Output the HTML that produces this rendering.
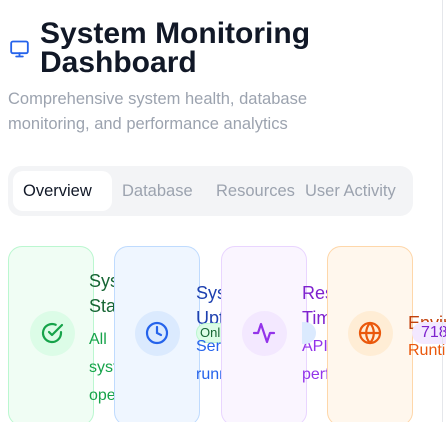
<!DOCTYPE html>
<html><head><style>
*{margin:0;padding:0;box-sizing:border-box}
html,body{width:446px;height:422px;overflow:hidden;background:#fff}
body{font-family:"Liberation Sans",Arial,sans-serif}
#w{position:relative;width:446px;height:422px;overflow:hidden}
.a{position:absolute;display:block;white-space:nowrap}
.h{font-size:30px;line-height:30px;font-weight:bold;color:#111827}
.sub{font-size:16.5px;line-height:25px;color:#9ca3af}
.tab{font-size:16.5px;line-height:20px;color:#9ca3af}
.card{border-radius:14px;border:1px solid;width:86px;height:180px;top:246px}
.ic{width:45px;height:45px;border-radius:50%;top:311px}
.t{font-size:18px;line-height:25px;font-weight:500}
.d{font-size:16px;line-height:28px}
</style></head><body><div id="w">
<svg class="a" style="left:9px;top:39px" width="21" height="20" viewBox="0 0 24 24" fill="none" stroke="#2563eb" stroke-width="2.2" stroke-linecap="round"><rect x="2" y="3" width="20" height="14" rx="2"/><path d="M8 21h8M12 17v4"/></svg>
<div class="a h" style="left:40px;top:19px">System Monitoring</div>
<div class="a h" style="left:40px;top:48px">Dashboard</div>
<div class="a sub" style="left:8px;top:87px">Comprehensive system health, database</div>
<div class="a sub" style="left:8px;top:112px">monitoring, and performance analytics</div>

<div class="a" style="left:8px;top:166px;width:405px;height:50px;background:#f3f4f6;border-radius:13px"></div>
<div class="a" style="left:13px;top:171px;width:99px;height:40px;background:#fff;border-radius:10px"></div>
<div class="a tab" style="left:23px;top:181px;color:#111827">Overview</div>
<div class="a tab" style="left:122px;top:181px">Database</div>
<div class="a tab" style="left:216px;top:181px">Resources</div>
<div class="a tab" style="left:305px;top:181px">User Activity</div>

<!-- card 1 -->
<div class="a card" style="left:8px;background:#f0fdf4;border-color:#bbf7d0"></div>
<div class="a ic" style="left:30px;background:#dcfce7"></div>
<svg class="a" style="left:40px;top:321px" width="24" height="24" viewBox="0 0 24 24" fill="none" stroke="#16a34a" stroke-width="2.2" stroke-linecap="round" stroke-linejoin="round"><path d="M21 11.1V12a9 9 0 1 1-5.3-8.2"/><path d="M9 11l3 3L22 4"/></svg>
<div class="a t" style="left:89px;top:269px;color:#166534">System<br>Status</div>
<div class="a d" style="left:89px;top:326px;color:#16a34a">All<br>systems<br>operational</div>

<!-- card 2 -->
<div class="a card" style="left:114px;background:#eff6ff;border-color:#bfdbfe"></div>
<div class="a ic" style="left:135px;background:#dbeafe"></div>
<svg class="a" style="left:145px;top:321px" width="24" height="24" viewBox="0 0 24 24" fill="none" stroke="#2563eb" stroke-width="2.2" stroke-linecap="round"><circle cx="12" cy="12" r="10"/><path d="M12 6v6l4 2"/></svg>
<div class="a t" style="left:196px;top:281px;color:#1e40af">System<br>Uptime</div>
<div class="a" style="left:196px;top:323px;width:30px;height:20px;border-radius:10px 0 0 10px;background:#dcfce7;border:1px solid #bbf7d0;font-size:13px;line-height:18px;color:#166534;padding-left:3px;overflow:hidden;white-space:nowrap">Online</div>
<div class="a d" style="left:196px;top:333px;color:#2563eb">Server<br>running</div>

<!-- card 3 -->
<div class="a card" style="left:221px;background:#faf5ff;border-color:#e9d5ff"></div>
<div class="a ic" style="left:242px;background:#f3e8ff"></div>
<svg class="a" style="left:252px;top:321px" width="24" height="24" viewBox="0 0 24 24" fill="none" stroke="#9333ea" stroke-width="2.2" stroke-linecap="round" stroke-linejoin="round"><path d="M22 12h-4l-3 9L9 3l-3 9H2"/></svg>
<div class="a t" style="left:302px;top:281px;color:#7e22ce">Response<br>Time</div>
<div class="a d" style="left:302px;top:333px;color:#9333ea">API<br>performance</div>
<div class="a" style="left:302px;top:322px;width:14px;height:22px;border-radius:0 11px 11px 0;background:#dbeafe"></div>

<!-- card 4 -->
<div class="a card" style="left:327px;background:#fff7ed;border-color:#fed7aa"></div>
<div class="a ic" style="left:348px;background:#ffedd5"></div>
<svg class="a" style="left:358px;top:321px" width="24" height="24" viewBox="0 0 24 24" fill="none" stroke="#ea580c" stroke-width="2.2" stroke-linecap="round"><circle cx="12" cy="12" r="10"/><path d="M2 12h20M12 2a15 15 0 0 1 0 20M12 2a15 15 0 0 0 0 20"/></svg>
<div class="a t" style="left:408px;top:311px;color:#c2410c">Environment</div>
<div class="a d" style="left:408px;top:337px;color:#ea580c">Runtime</div>
<div class="a" style="left:412px;top:322px;width:34px;height:22px;background:#f3e8ff;border-radius:11px 0 0 11px;font-size:16px;color:#7e22ce;padding-left:9px;line-height:22px;overflow:hidden">718</div>
<div class="a" style="left:442px;top:0;width:1px;height:422px;background:#e5e7eb"></div>
</div></body></html>
